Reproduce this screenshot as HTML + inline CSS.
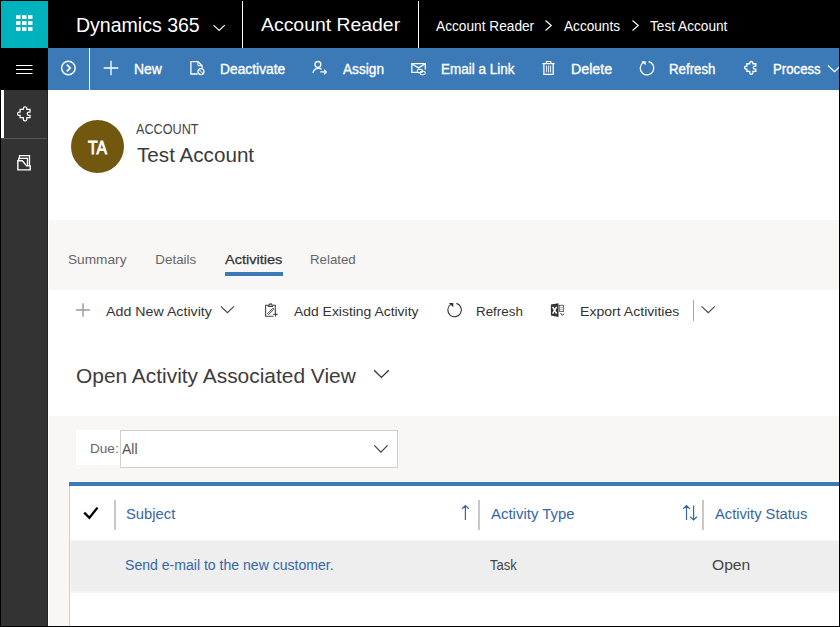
<!DOCTYPE html>
<html><head><meta charset="utf-8">
<style>
*{margin:0;padding:0;box-sizing:border-box}
html,body{width:840px;height:627px;overflow:hidden;background:#fff}
body{font-family:"Liberation Sans",sans-serif;position:relative}
.a{position:absolute}
.t{position:absolute;white-space:nowrap;line-height:1;transform-origin:0 0}
svg{position:absolute;left:0;top:0;overflow:visible}
</style></head><body>
<!-- top bar -->
<div class="a" style="left:0;top:0;width:840px;height:48px;background:#000"></div>
<div class="a" style="left:1px;top:1px;width:47px;height:47px;background:#00b2be"></div>
<!-- command bar -->
<div class="a" style="left:0;top:48px;width:48px;height:42px;background:#000"></div>
<div class="a" style="left:48px;top:48px;width:792px;height:42px;background:#3b79b7"></div>
<div class="a" style="left:89px;top:48px;width:1px;height:42px;background:#fff"></div>
<div class="a" style="left:242px;top:1px;width:1px;height:47px;background:#fff"></div>
<div class="a" style="left:418px;top:1px;width:1px;height:47px;background:#fff"></div>
<!-- nav -->
<div class="a" style="left:0;top:90px;width:47px;height:537px;background:#333"></div>
<div class="a" style="left:47px;top:90px;width:1px;height:537px;background:#252525"></div>
<div class="a" style="left:1px;top:90px;width:3px;height:48px;background:#fff"></div>
<div class="a" style="left:1px;top:138px;width:46px;height:1px;background:#555"></div>
<!-- header grey band -->
<div class="a" style="left:49px;top:220px;width:791px;height:70px;background:#f8f7f6"></div>
<div class="a" style="left:225px;top:272px;width:58px;height:4px;background:#3b79b7"></div>
<!-- avatar -->
<div class="a" style="left:71px;top:120px;width:53px;height:53px;border-radius:50%;background:#72570f"></div>
<!-- view grey band -->
<div class="a" style="left:49px;top:416px;width:791px;height:211px;background:#f8f7f6"></div>
<!-- filter -->
<div class="a" style="left:76px;top:430px;width:44px;height:35px;background:#fff"></div>
<div class="a" style="left:120px;top:430px;width:278px;height:38px;background:#fff;border:1px solid #cfcfcf"></div>
<!-- grid -->
<div class="a" style="left:69px;top:481px;width:771px;height:1px;background:#fff"></div>
<div class="a" style="left:69px;top:482px;width:771px;height:145px;background:#fff;border-left:1px solid #d0d0d0"></div>
<div class="a" style="left:69px;top:482px;width:771px;height:4px;background:#3b79b7"></div>
<div class="a" style="left:70px;top:540px;width:770px;height:53px;background:#f5f5f5"></div>
<div class="a" style="left:71px;top:541px;width:769px;height:50px;background:#eeeeee"></div>
<div class="a" style="left:114px;top:500px;width:2px;height:30px;background:#c8c8c8"></div>
<div class="a" style="left:478px;top:500px;width:2px;height:30px;background:#c8c8c8"></div>
<div class="a" style="left:702px;top:500px;width:2px;height:30px;background:#c8c8c8"></div>
<div class="a" style="left:693px;top:300px;width:1px;height:21px;background:#aaa"></div>

<svg width="840" height="627" viewBox="0 0 840 627">
<!-- waffle -->
<g fill="#fff">
<rect x="16" y="15.2" width="4.5" height="3.7"/><rect x="22" y="15.2" width="4.5" height="3.7"/><rect x="28" y="15.2" width="4.5" height="3.7"/>
<rect x="16" y="21.2" width="4.5" height="3.7"/><rect x="22" y="21.2" width="4.5" height="3.7"/><rect x="28" y="21.2" width="4.5" height="3.7"/>
<rect x="16" y="27.2" width="4.5" height="3.7"/><rect x="22" y="27.2" width="4.5" height="3.7"/><rect x="28" y="27.2" width="4.5" height="3.7"/>
</g>
<!-- hamburger -->
<g fill="#fff"><rect x="16" y="65" width="16.5" height="1"/><rect x="16" y="69" width="16.5" height="1"/><rect x="16" y="73" width="16.5" height="1"/></g>
<g fill="none" stroke="#fff" stroke-width="1.1">
<path d="M213.5 25.2 L219.2 30.5 L224.8 25.2"/>
<path d="M545.5 20.5 L551.3 25.5 L545.5 30.5"/>
<path d="M632.5 20.5 L638.3 25.5 L632.5 30.5"/>
</g>
<!-- command bar icons -->
<g fill="none" stroke="#fff" stroke-width="1.3">
<circle cx="68.4" cy="68" r="6.8" stroke-width="1.45"/>
<path d="M66.8 64.6 L70.2 68 L66.8 71.4" stroke-width="1.7"/>
<path d="M103.7 68 H118.3 M111 60.8 V75.2"/>
<!-- deactivate -->
<path d="M197.6 74 H190.9 V61.6 H198 L202.1 65.7 V68.4"/>
<path d="M198 61.6 V65.7 H202.1" stroke-width="1"/>
<circle cx="201" cy="71.6" r="3"/>
<path d="M199 69.6 L203 73.6" stroke-width="1"/>
<!-- assign -->
<circle cx="317.9" cy="64.4" r="2.9"/>
<path d="M312.9 72.8 A5.7 5.7 0 0 1 321.6 69.2"/>
<path d="M320.3 71.9 H326.3 M324 69.6 L326.3 71.9 L324 74.2"/>
<!-- email -->
<path d="M418 72.3 H411.8 V63.6 H425.3 V69.5"/>
<path d="M412 64 L418.5 67.9 L425 64"/>
<rect x="417.3" y="69.2" width="5.2" height="3.6" rx="1.8" stroke-width="1.1"/>
<rect x="420" y="71.2" width="5.2" height="3.6" rx="1.8" stroke-width="1.1"/>
<!-- delete -->
<path d="M542.4 63.6 H554.6"/>
<path d="M546.4 63.4 V61.5 H550.9 V63.4" stroke-width="1.1"/>
<path d="M543.9 63.6 V74.4 H553.2 V63.6"/>
<path d="M546.6 65.6 V72.4 M548.6 65.6 V72.4 M550.6 65.6 V72.4" stroke-width="0.9"/>
<!-- refresh -->
<path d="M648.6 61.5 A6.8 6.8 0 1 1 643.2 62.5"/>
<!-- process -->
<path transform="translate(750.35 67.95) scale(0.9) translate(-23.95 -113.95)" stroke-width="1.5" d="M20.1 109.3 H23.3 V108.5 A1.75 1.75 0 0 1 26.8 108.5 V109.3 H30 V112 H28.9 A1.65 1.65 0 0 0 28.9 115.3 H30 V117.7 H26.8 V119.2 A1.75 1.75 0 0 1 23.3 119.2 V117.7 H20.1 V115.3 H19.2 A1.65 1.65 0 0 1 19.2 112 H20.1 Z"/>
<path d="M828 65.5 L834.5 71.7 L841 65.5"/>
</g>
<path fill="#fff" d="M641.3 61.2 H645.7 V65.3 Z"/>
<!-- nav icons -->
<g fill="none" stroke="#fff" stroke-width="1.3">
<path d="M20.1 109.3 H23.3 V108.5 A1.75 1.75 0 0 1 26.8 108.5 V109.3 H30 V112 H28.9 A1.65 1.65 0 0 0 28.9 115.3 H30 V117.7 H26.8 V119.2 A1.75 1.75 0 0 1 23.3 119.2 V117.7 H20.1 V115.3 H19.2 A1.65 1.65 0 0 1 19.2 112 H20.1 Z" stroke-width="1.25"/>
<path d="M17.85 160.8 H22.3 L26.6 165.9 H30.2 V169.9 H17.85 Z" stroke-width="1.4"/>
<path d="M18.7 160.8 V158.3 H27.5 V165.9"/>
<path d="M19.5 158.3 V155.6 H29.5 V165.9"/>
</g>
<!-- activity toolbar -->
<path d="M76 310 H90 M83 303.2 V316.8" stroke="#999" stroke-width="1.4" fill="none"/>
<g fill="none" stroke="#444" stroke-width="1.1">
<path d="M220.9 306.3 L227.4 312.7 L234 306.3"/>
<path d="M701.5 306.3 L708.3 312.7 L714.9 306.3"/>
<path d="M268.3 305.3 H265.6 V316.3 H273.5 M272.6 305.3 H275.3 V312.6"/>
<path d="M268.4 306.4 L268.9 304.8 H269.5 A1.3 1.3 0 0 1 272 304.8 L272.5 306.4 Z"/>
<path d="M267.6 313.6 L273 308.2 L274 309.2 L268.6 314.6 Z" stroke-width="1"/>
<path d="M273.3 314.4 H277.6 M275.5 312.2 V316.6" stroke-width="1.1"/>
<path d="M456.4 303.4 A6.8 6.8 0 1 1 450.7 304.4" stroke="#333"/>
</g>
<path fill="#333" d="M448.8 303.1 H453.3 V307.3 Z"/>
<path fill="#333" d="M550.9 304.6 L558.5 303.2 V317 L550.9 315.6 Z"/>
<path d="M552.6 306.9 L556.6 313.6 M556.6 306.9 L552.6 313.6" stroke="#fff" stroke-width="1.5"/>
<g fill="none" stroke="#444" stroke-width="1">
<rect x="559.3" y="305.3" width="4.3" height="6.1" stroke="#555" stroke-width="0.9"/>
<path d="M559.3 307.4 H563.6 M559.3 309.4 H563.6" stroke="#999" stroke-width="0.8"/>
<path d="M560.6 313 L562.1 315.3 L564.3 313.8"/>
</g>
<!-- view chevron & dropdown chevron -->
<path d="M374.2 370.3 L381.4 377.4 L388.8 370.3" stroke="#333" stroke-width="1.35" fill="none"/>
<path d="M374.3 445.4 L380.9 452.1 L387.6 445.4" stroke="#444" stroke-width="1.3" fill="none"/>
<!-- grid header icons -->
<path d="M84.2 512.6 L89.4 517.8 L97.5 507.6" stroke="#000" stroke-width="2.3" fill="none"/>
<g fill="none" stroke="#3566a8" stroke-width="1.2">
<path d="M465.4 506 V519.9 M462.1 508.8 L465.4 505.6 L468.8 508.8"/>
<path d="M686.5 506 V519.9 M683.2 508.8 L686.5 505.6 L689.8 508.8"/>
<path d="M693.6 505.6 V519.5 M690.3 516.8 L693.6 519.9 L696.9 516.8"/>
</g>
</svg>

<div class="t" style="left:76.02px;top:16.0px;font-size:19.7px;color:#ffffff;transform:scaleX(0.9918);">Dynamics 365</div>
<div class="t" style="left:261.3px;top:14.8px;font-size:19.1px;color:#ffffff;transform:scaleX(1.0161);">Account Reader</div>
<div class="t" style="left:436.2px;top:19.0px;font-size:14.0px;color:#ffffff;transform:scaleX(0.978);">Account Reader</div>
<div class="t" style="left:563.6px;top:19.0px;font-size:14.0px;color:#ffffff;transform:scaleX(0.9719);">Accounts</div>
<div class="t" style="left:650.0px;top:19.0px;font-size:14.0px;color:#ffffff;transform:scaleX(0.9747);">Test Account</div>
<div class="t" style="left:133.8px;top:62.0px;font-size:14.0px;color:#ffffff;transform:scaleX(0.9963);-webkit-text-stroke:0.35px #fff;">New</div>
<div class="t" style="left:219.51px;top:62.0px;font-size:14.0px;color:#ffffff;transform:scaleX(0.9862);-webkit-text-stroke:0.35px #fff;">Deactivate</div>
<div class="t" style="left:343.0px;top:62.0px;font-size:14.0px;color:#ffffff;transform:scaleX(0.9756);-webkit-text-stroke:0.35px #fff;">Assign</div>
<div class="t" style="left:440.84px;top:62.0px;font-size:14.0px;color:#ffffff;transform:scaleX(0.9627);-webkit-text-stroke:0.35px #fff;">Email a Link</div>
<div class="t" style="left:571.38px;top:62.0px;font-size:14.0px;color:#ffffff;transform:scaleX(1.0154);-webkit-text-stroke:0.35px #fff;">Delete</div>
<div class="t" style="left:669.05px;top:62.0px;font-size:14.0px;color:#ffffff;transform:scaleX(0.9468);-webkit-text-stroke:0.35px #fff;">Refresh</div>
<div class="t" style="left:772.56px;top:62.0px;font-size:14.0px;color:#ffffff;transform:scaleX(0.9429);-webkit-text-stroke:0.35px #fff;">Process</div>
<div class="t" style="left:136.2px;top:122.0px;font-size:14.0px;color:#444;transform:scaleX(0.9029);">ACCOUNT</div>
<div class="t" style="left:136.8px;top:144.6px;font-size:20.0px;color:#3a3a3a;transform:scaleX(1.0327);">Test Account</div>
<div class="t" style="left:88.2px;top:139.8px;font-size:17.6px;color:#ffffff;transform:scaleX(0.8952);-webkit-text-stroke:0.8px #fff;">TA</div>
<div class="t" style="left:68.48px;top:252.8px;font-size:13.4px;color:#666;transform:scaleX(1.0214);">Summary</div>
<div class="t" style="left:155.3px;top:252.8px;font-size:13.4px;color:#666;transform:scaleX(1.0);">Details</div>
<div class="t" style="left:225.4px;top:252.8px;font-size:13.5px;color:#333;transform:scaleX(1.0774);-webkit-text-stroke:0.25px #333;">Activities</div>
<div class="t" style="left:310.41px;top:252.8px;font-size:13.4px;color:#666;transform:scaleX(0.9911);">Related</div>
<div class="t" style="left:106.3px;top:304.8px;font-size:13.7px;color:#333;transform:scaleX(1.0392);">Add New Activity</div>
<div class="t" style="left:294.0px;top:304.8px;font-size:13.7px;color:#333;transform:scaleX(1.0163);">Add Existing Activity</div>
<div class="t" style="left:476.22px;top:304.8px;font-size:13.7px;color:#333;transform:scaleX(0.9783);">Refresh</div>
<div class="t" style="left:580.27px;top:304.8px;font-size:13.7px;color:#333;transform:scaleX(1.0284);">Export Activities</div>
<div class="t" style="left:75.76px;top:365.7px;font-size:20.1px;color:#3c3c3c;transform:scaleX(1.041);">Open Activity Associated View</div>
<div class="t" style="left:89.61px;top:441.8px;font-size:13.7px;color:#666;transform:scaleX(0.9926);">Due:</div>
<div class="t" style="left:122.0px;top:441.6px;font-size:14.0px;color:#555;transform:scaleX(1.0);">All</div>
<div class="t" style="left:125.64px;top:506.0px;font-size:15.4px;color:#3566a8;transform:scaleX(0.96);">Subject</div>
<div class="t" style="left:490.5px;top:506.0px;font-size:15.2px;color:#3566a8;transform:scaleX(0.9845);">Activity Type</div>
<div class="t" style="left:714.8px;top:506.0px;font-size:15.2px;color:#3566a8;transform:scaleX(0.9674);">Activity Status</div>
<div class="t" style="left:124.6px;top:558.0px;font-size:14.0px;color:#3566a8;transform:scaleX(1.0044);">Send e-mail to the new customer.</div>
<div class="t" style="left:489.8px;top:558.0px;font-size:14.5px;color:#444;transform:scaleX(0.8933);">Task</div>
<div class="t" style="left:711.82px;top:558.0px;font-size:14.5px;color:#444;transform:scaleX(1.0765);">Open</div>
<div class="a" style="left:0;top:0;width:840px;height:627px;border:1px solid #000"></div>
</body></html>
